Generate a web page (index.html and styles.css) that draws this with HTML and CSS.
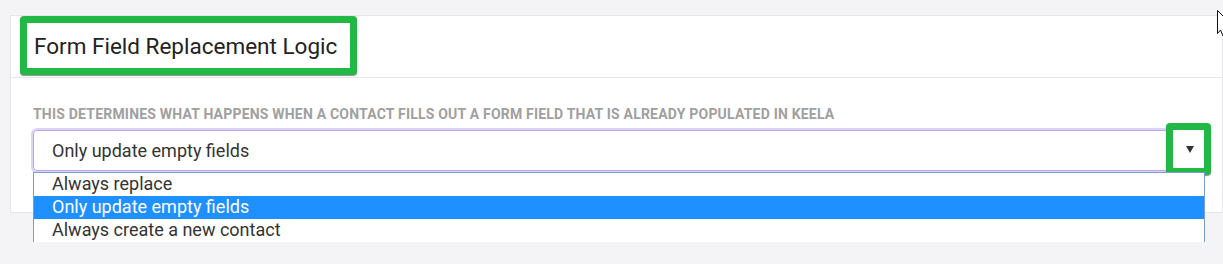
FILE: index.html
```html
<!DOCTYPE html>
<html lang="en">
<head>
    <meta charset="UTF-8">
    <title>Form Field Replacement Logic</title>
    <link rel="stylesheet" href="styles.css">
</head>
<body>
<div class="topbar"></div>
<div class="card">
    <div class="card__header">
        <div class="mark mark--title">
            <h2 class="card__title">Form Field Replacement Logic</h2>
        </div>
    </div>
    <div class="card__body">
        <label class="field__label">This determines what happens when a contact fills out a form field that is already populated in Keela</label>
        <div class="select">
            <div class="select__box">Only update empty fields</div>
            <div class="mark mark--arrow">
                <svg width="8" height="7" viewBox="0 0 8 7"><polygon points="0,0 8,0 4,7" fill="#333"/></svg>
            </div>
            <ul class="select__list">
                <li class="select__option">Always replace</li>
                <li class="select__option is-selected">Only update empty fields</li>
                <li class="select__option">Always create a new contact</li>
            </ul>
        </div>
    </div>
</div>
<!-- mouse pointer seen at the top right edge -->
<svg class="cursor" width="12" height="26" viewBox="0 0 12 26">
    <polygon points="0.5,0.5 0.5,23.5 3.5,20 6,26 12,26 12,12" fill="#fff" stroke="#111" stroke-width="1"/>
</svg>
</body>
</html>
```

FILE: styles.css
```css
html, body {
    margin: 0;
    padding: 0;
}
body {
    background: #f4f4f6;
    font-family: Roboto, "Liberation Sans", Arial, sans-serif;
    color: #333;
    width: 1223px;
    height: 264px;
    overflow: hidden;
    position: relative;
}
.topbar {
    height: 15px;
}
.card {
    margin-left: 10px;
    height: 198px;
    box-sizing: border-box;
    background: #fff;
    border: 1px solid #e6e6ea;
}
.card__header {
    height: 61px;
    border-bottom: 1px solid #e8e8ea;
    padding-left: 9px;
}
.mark {
    box-sizing: border-box;
    border: 7px solid #22b846;
    border-radius: 4px;
    box-shadow: 0 1px 1px rgba(0, 0, 0, .45);
    background: #fff;
}
.mark--title {
    width: 337px;
    height: 59px;
    padding-left: 7px;
}
.card__title {
    margin: 0;
    font-size: 22.5px;
    font-weight: 400;
    line-height: 47px;
    color: #222;
}
.card__body {
    padding: 28px 17px 0 22px;
}
.field__label {
    display: block;
    font-size: 14px;
    font-weight: 700;
    line-height: 16px;
    letter-spacing: .2px;
    text-transform: uppercase;
    color: #a0a0a0;
    margin-bottom: 8px;
}
.select {
    position: relative;
}
.select__box {
    height: 41px;
    box-sizing: border-box;
    border: 1px solid #b9a9ec;
    border-radius: 4px;
    box-shadow: 0 0 0 2px #dcd3f6;
    padding-left: 18px;
    font-size: 18px;
    line-height: 39px;
    color: #333;
}
.mark--arrow {
    position: absolute;
    left: 1133px;
    top: -7px;
    width: 45px;
    height: 52px;
    display: flex;
    align-items: center;
    justify-content: center;
    padding-left: 2px;
}
.select__list {
    position: absolute;
    left: 0;
    right: 0;
    top: 42px;
    margin: 0;
    padding: 0;
    list-style: none;
    background: #fff;
    border: 1px solid #7b9bd3;
    border-bottom: none;
}
.select__option {
    height: 23px;
    line-height: 21px;
    padding-left: 18px;
    font-size: 18px;
    color: #333;
}
.select__option.is-selected {
    background: #1e90ff;
    color: #fff;
}
.cursor {
    position: absolute;
    left: 1217px;
    top: 10px;
}
```
